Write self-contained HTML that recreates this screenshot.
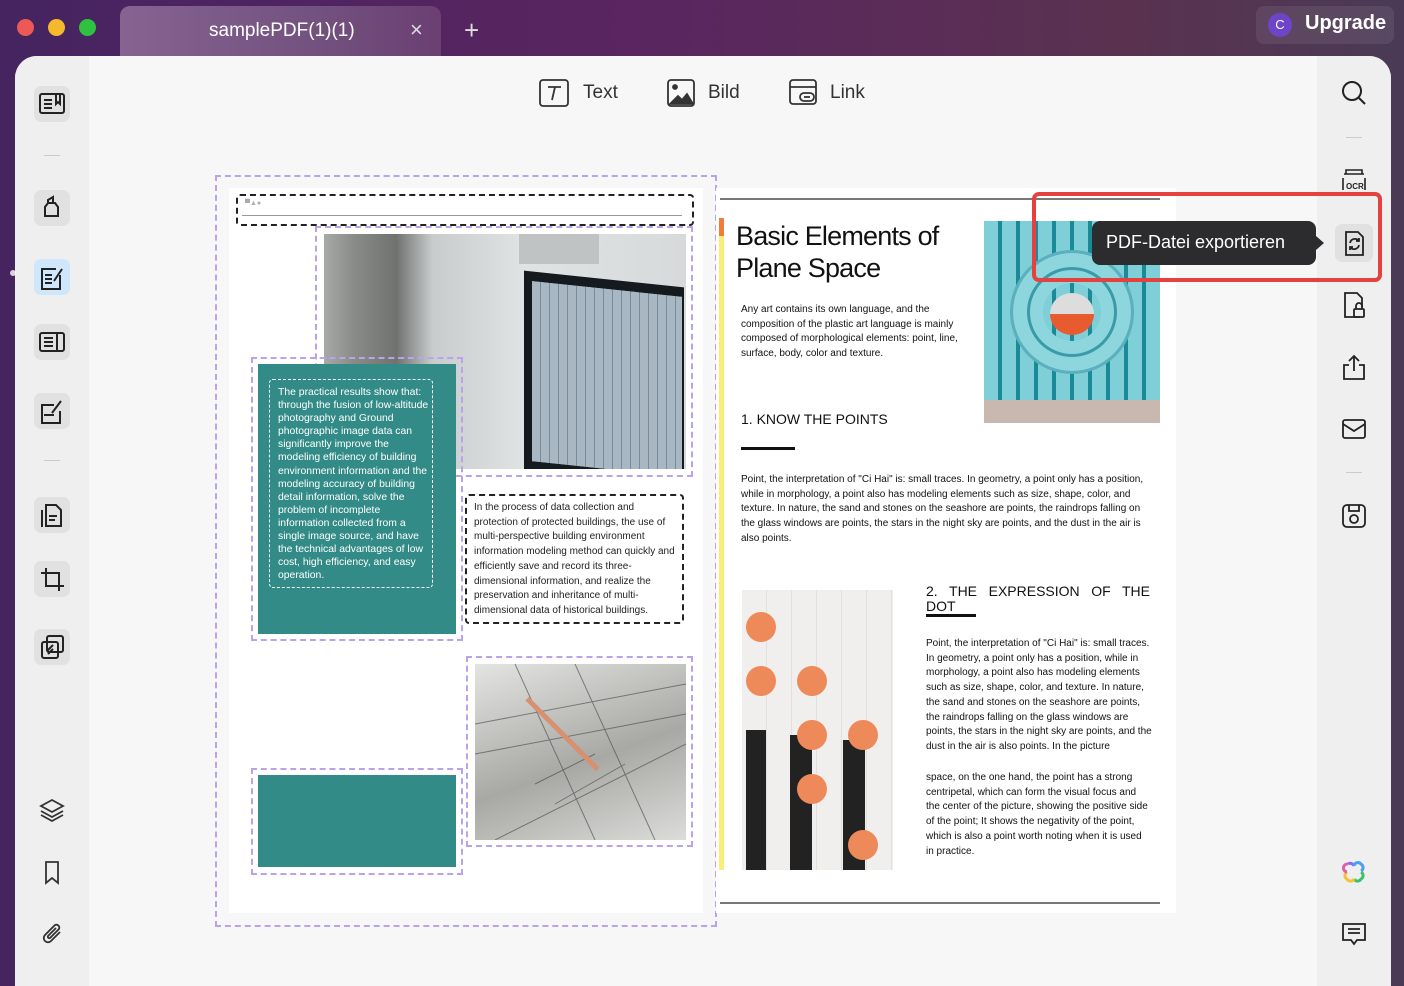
<!DOCTYPE html>
<html><head><meta charset="utf-8"><style>
*{margin:0;padding:0;box-sizing:border-box}
body{width:1404px;height:972px;overflow:hidden;position:relative;font-family:"Liberation Sans",Arial,sans-serif;background:linear-gradient(90deg,#452460 0%,#5a2560 45%,#5a3250 80%,#4a3a55 100%)}
.a{position:absolute}
.dot{position:absolute;top:19px;width:17px;height:17px;border-radius:50%}
.sb{position:absolute;left:34px;width:36px;height:36px;border-radius:7px;background:#e1e1e1}
.ri{position:absolute;left:1340px}
.dash{border:2px dashed #b9a3ea}
.bd{border:2px dashed #222}
.t10{font-size:10px;line-height:13px}
</style></head><body>
<div class="dot" style="left:17px;background:#ed5a56"></div>
<div class="dot" style="left:48px;background:#f4b92d"></div>
<div class="dot" style="left:79px;background:#2fc240"></div>
<div class="a" style="left:120px;top:6px;width:321px;height:52px;border-radius:10px 10px 0 0;background:linear-gradient(90deg,#866391,#73527f 60%,#6b3f72)"></div>
<div class="a" style="left:209px;top:20px;color:#fff;font-size:19px">samplePDF(1)(1)</div>
<div class="a" style="left:410px;top:17px;color:#ddd;font-size:22px">×</div>
<div class="a" style="left:464px;top:15px;color:#ddd;font-size:26px;font-weight:300">+</div>
<div class="a" style="left:1256px;top:6px;width:138px;height:38px;border-radius:8px;background:rgba(255,255,255,.08)"></div>
<div class="a" style="left:1268px;top:13px;width:24px;height:24px;border-radius:50%;background:#6e45c9;color:#fff;font-size:13px;text-align:center;line-height:24px">C</div>
<div class="a" style="left:1305px;top:12px;color:#fff;font-size:20px;font-weight:bold">Upgrade</div>

<div class="a" style="left:15px;top:56px;width:1376px;height:930px;border-radius:22px 22px 0 0;background:#f7f7f7;overflow:hidden">
 <div class="a" style="left:0;top:0;width:74px;height:930px;background:#efefef"></div>
 <div class="a" style="left:1302px;top:0;width:74px;height:930px;background:#efefef"></div>
</div>
<div class="a" style="left:10px;top:270px;width:6px;height:6px;border-radius:50%;background:#fff;opacity:.8"></div>

<div class="sb" style="top:86px"></div>
<svg class="a" style="left:38px;top:90px" width="28" height="28" fill="none" stroke="#222" stroke-width="2"><rect x="2" y="4" width="24" height="19" rx="2"/><path d="M6 10h8M6 14h8M6 18h8M18 4v10l2-2 2 2V4"/></svg>
<div class="a" style="left:44px;top:155px;width:16px;height:1px;background:#ccc"></div>
<div class="sb" style="top:190px"></div>
<svg class="a" style="left:38px;top:194px" width="28" height="28" fill="none" stroke="#222" stroke-width="2"><path d="M10 6l5-3v6H10zM7 13l3-4h7l3 4v9H7z"/></svg>
<div class="sb" style="top:259px;background:#cfe7fb"></div>
<svg class="a" style="left:38px;top:263px" width="28" height="28" fill="none" stroke="#222" stroke-width="2"><path d="M18 6H4v20h18V12M7 12h7M7 16h7M7 20h7M16 18l8-12"/></svg>
<div class="sb" style="top:324px"></div>
<svg class="a" style="left:38px;top:328px" width="28" height="28" fill="none" stroke="#222" stroke-width="2"><rect x="2" y="5" width="24" height="18" rx="2"/><path d="M6 10h9M6 14h9M6 18h9M19 5v18"/></svg>
<div class="sb" style="top:393px"></div>
<svg class="a" style="left:38px;top:397px" width="28" height="28" fill="none" stroke="#222" stroke-width="2"><path d="M16 8H4v18h18V14M6 18h10M14 16l9-12"/></svg>
<div class="a" style="left:44px;top:460px;width:16px;height:1px;background:#ccc"></div>
<div class="sb" style="top:497px"></div>
<svg class="a" style="left:38px;top:501px" width="28" height="28" fill="none" stroke="#222" stroke-width="2"><path d="M8 4h10l5 5v16H8zM4 9v17"/><path d="M11 15h8M11 19h6"/></svg>
<div class="sb" style="top:561px"></div>
<svg class="a" style="left:38px;top:565px" width="28" height="28" fill="none" stroke="#222" stroke-width="2"><path d="M8 3v18h18M3 8h18v18"/></svg>
<div class="sb" style="top:629px"></div>
<svg class="a" style="left:38px;top:633px" width="28" height="28" fill="none" stroke="#222" stroke-width="2"><rect x="9" y="3" width="16" height="16" rx="2"/><rect x="4" y="9" width="16" height="16" rx="2"/><path d="M9 18l6-6M10 21l5-5"/></svg>
<svg class="a" style="left:38px;top:796px" width="28" height="28" fill="none" stroke="#333" stroke-width="1.8"><path d="M14 4l11 6-11 6-11-6zM3 15l11 6 11-6M3 19l11 6 11-6"/></svg>
<svg class="a" style="left:38px;top:858px" width="28" height="28" fill="none" stroke="#333" stroke-width="1.8"><path d="M8 4h12v21l-6-5-6 5z"/></svg>
<svg class="a" style="left:38px;top:920px" width="28" height="28" fill="none" stroke="#333" stroke-width="1.8"><path d="M22 12l-9 9a4 4 0 0 1-6-6l10-10a3 3 0 0 1 4 4l-9 9a1.5 1.5 0 0 1-2-2l8-8"/></svg>

<svg class="a" style="left:538px;top:78px" width="32" height="30" fill="none" stroke="#333" stroke-width="1.8"><rect x="2" y="2" width="28" height="26" rx="3"/><path d="M10 9h13M17 9l-3 13"/></svg>
<div class="a" style="left:583px;top:82px;font-size:19px;color:#333">Text</div>
<svg class="a" style="left:666px;top:78px" width="30" height="30" fill="none" stroke="#333" stroke-width="1.8"><rect x="2" y="2" width="26" height="26" rx="3"/><circle cx="9" cy="9" r="2" fill="#333"/><path d="M4 26l8-8 4 4 5-6 6 10z" fill="#333"/></svg>
<div class="a" style="left:708px;top:82px;font-size:19px;color:#333">Bild</div>
<svg class="a" style="left:788px;top:78px" width="32" height="30" fill="none" stroke="#333" stroke-width="1.8"><rect x="2" y="2" width="26" height="24" rx="3"/><path d="M2 9h26"/><rect x="12" y="15" width="14" height="8" rx="4"/><path d="M16 19h6"/></svg>
<div class="a" style="left:830px;top:82px;font-size:19px;color:#333">Link</div>

<svg class="ri" style="top:79px" width="28" height="28" fill="none" stroke="#222" stroke-width="2"><circle cx="12" cy="12" r="9"/><path d="M19 19l6 6"/></svg>
<div class="a" style="left:1346px;top:137px;width:16px;height:1px;background:#ccc"></div>
<svg class="ri" style="top:166px" width="28" height="28" fill="none" stroke="#222" stroke-width="1.6"><path d="M4 8h20M6 8V4h16v4M3 12v12M25 12v12"/><text x="6" y="23" font-size="8" font-family="Liberation Sans" fill="#222" stroke="none" font-weight="bold">OCR</text></svg>
<div class="a" style="left:1335px;top:224px;width:38px;height:38px;border-radius:7px;background:#e1e1e1"></div>
<svg class="ri" style="top:229px" width="28" height="28" fill="none" stroke="#222" stroke-width="1.8"><path d="M6 3h12l5 5v18H6z"/><path d="M10 14a5 5 0 0 1 9-2M19 16a5 5 0 0 1-9 2M19 9v3h-3M10 21v-3h3"/></svg>
<svg class="ri" style="top:291px" width="28" height="28" fill="none" stroke="#222" stroke-width="1.8"><path d="M20 26H5V2h12l5 5v9"/><rect x="14" y="18" width="10" height="8" rx="1"/><path d="M16 18v-3a3 3 0 0 1 6 0v3"/></svg>
<svg class="ri" style="top:353px" width="28" height="28" fill="none" stroke="#222" stroke-width="1.8"><path d="M9 12H4v14h20V12h-5M14 18V3M9 8l5-5 5 5"/></svg>
<svg class="ri" style="top:415px" width="28" height="28" fill="none" stroke="#222" stroke-width="1.8"><rect x="3" y="5" width="22" height="18" rx="2"/><path d="M3 9l11 7 11-7"/></svg>
<div class="a" style="left:1346px;top:472px;width:16px;height:1px;background:#ccc"></div>
<svg class="ri" style="top:502px" width="28" height="28" fill="none" stroke="#222" stroke-width="1.8"><rect x="3" y="3" width="22" height="22" rx="4"/><path d="M9 3v6h10V3"/><circle cx="14" cy="17" r="4"/></svg>
<svg class="ri" style="top:858px" width="28" height="28" fill="none" stroke-width="3"><path d="M8 6a4 4 0 0 1 6 2" stroke="#8a6cf0"/><path d="M14 8a4 4 0 0 1 7-2 4 4 0 0 1 0 7" stroke="#4aa0f0"/><path d="M21 14a4 4 0 0 1 0 7 4 4 0 0 1-7 0" stroke="#3fc06a"/><path d="M14 21a4 4 0 0 1-7 0 4 4 0 0 1 0-7" stroke="#f3c23a"/><path d="M7 14a4 4 0 0 1 1-8" stroke="#e060b0"/></svg>
<svg class="ri" style="top:920px" width="28" height="28" fill="none" stroke="#222" stroke-width="1.8"><path d="M3 4h22v16H17l-3 4-3-4H3z"/><path d="M8 9h12M8 13h12"/></svg>

<!-- left page -->
<div class="a dash" style="left:215px;top:175px;width:502px;height:752px"></div>
<div class="a" style="left:229px;top:188px;width:474px;height:725px;background:#fff"></div>
<div class="a bd" style="left:236px;top:194px;width:458px;height:32px;border-radius:4px"></div>
<div class="a" style="left:242px;top:215px;width:440px;height:1px;background:#999"></div>
<div class="a" style="left:245px;top:200px;font-size:7px;color:#aaa">▀▲●</div>
<div class="a dash" style="left:315px;top:226px;width:378px;height:251px"></div>
<div class="a" style="left:324px;top:234px;width:362px;height:235px;overflow:hidden;background:linear-gradient(90deg,#a8aaa8 0%,#8a8c8a 8%,#707270 20%,#c8cccc 30%,#dfe3e3 55%,#d6dada 100%)">
 <div class="a" style="left:200px;top:45px;width:160px;height:200px;background:#151a1e;transform:skewY(6deg)"></div>
 <div class="a" style="left:208px;top:55px;width:150px;height:180px;background:repeating-linear-gradient(90deg,#b8c8d4 0 8px,#7f9ab0 8px 9px),#b8c8d4;transform:skewY(6deg);opacity:.9"></div>
 <div class="a" style="left:195px;top:0;width:80px;height:30px;background:#bfc3c3"></div>
</div>
<div class="a dash" style="left:251px;top:357px;width:212px;height:284px"></div>
<div class="a" style="left:258px;top:364px;width:198px;height:270px;background:#338b87"></div>
<div class="a" style="left:269px;top:379px;width:164px;height:209px;border:1.5px dashed #fff;border-radius:4px"></div>
<div class="a" style="left:278px;top:386px;width:152px;color:#fff;font-size:10.4px;line-height:13.1px">The practical results show that: through the fusion of low-altitude photography and Ground photographic image data can significantly improve the modeling efficiency of building environment information and the modeling accuracy of building detail information, solve the problem of incomplete information collected from a single image source, and have the technical advantages of low cost, high efficiency, and easy operation.</div>
<div class="a bd" style="left:465px;top:494px;width:219px;height:130px;border-radius:4px"></div>
<div class="a" style="left:474px;top:501px;width:206px;color:#222;font-size:10px;line-height:14.7px">In the process of data collection and protection of protected buildings, the use of multi-perspective building environment information modeling method can quickly and efficiently save and record its three-dimensional information, and realize the preservation and inheritance of multi-dimensional data of historical buildings.</div>
<div class="a dash" style="left:466px;top:656px;width:227px;height:191px"></div>
<div class="a" style="left:475px;top:664px;width:211px;height:176px;overflow:hidden;background:linear-gradient(160deg,#e4e4e2,#a8a8a4 55%,#dcdcda)">
 <svg width="211" height="176" fill="none" stroke="#444" stroke-width="1" opacity=".6"><path d="M0 60L211 20M0 90L211 50M20 176L211 80M40 0L120 176M100 0L180 176M60 120l60-30M80 140l70-40"/></svg>
 <div class="a" style="left:85px;top:20px;width:5px;height:100px;background:#d89070;transform:rotate(-45deg)"></div>
</div>
<div class="a dash" style="left:251px;top:768px;width:212px;height:107px"></div>
<div class="a" style="left:258px;top:775px;width:198px;height:92px;background:#338b87"></div>

<!-- right page -->
<div class="a" style="left:716px;top:188px;width:460px;height:725px;background:#fff"></div>
<div class="a" style="left:720px;top:198px;width:440px;height:1.5px;background:#777"></div>
<div class="a" style="left:720px;top:902px;width:440px;height:1.5px;background:#777"></div>
<div class="a" style="left:719px;top:218px;width:5px;height:652px;background:#f8ee7a"></div>
<div class="a" style="left:719px;top:218px;width:5px;height:18px;background:#ef7d3c"></div>
<div class="a" style="left:736px;top:220px;font-size:27px;line-height:32px;color:#111;letter-spacing:-.8px">Basic Elements of<br>Plane Space</div>
<div class="a t10" style="left:741px;top:303px;width:225px;color:#111;line-height:14.7px">Any art contains its own language, and the composition of the plastic art language is mainly composed of morphological elements: point, line, surface, body, color and texture.</div>
<div class="a" style="left:984px;top:221px;width:176px;height:202px;background:repeating-linear-gradient(90deg,#7fcfd8 0 14px,#1a8a98 14px 18px);"></div>
<div class="a" style="left:1010px;top:250px;width:124px;height:124px;border-radius:50%;border:3px solid #5ab0bc;box-shadow:inset 0 0 0 14px #8ed6de,inset 0 0 0 17px #3a9aa8,inset 0 0 0 30px #8ed6de"></div>
<div class="a" style="left:1050px;top:293px;width:44px;height:42px;border-radius:50%;background:linear-gradient(#ddd 50%,#e85a30 50%)"></div>
<div class="a" style="left:984px;top:400px;width:176px;height:23px;background:#c8b8b0"></div>
<div class="a" style="left:741px;top:411px;font-size:14px;color:#111">1. KNOW THE POINTS</div>
<div class="a" style="left:741px;top:447px;width:54px;height:3px;background:#111"></div>
<div class="a t10" style="left:741px;top:473px;width:412px;color:#111;line-height:14.7px">Point, the interpretation of "Ci Hai" is: small traces. In geometry, a point only has a position, while in morphology, a point also has modeling elements such as size, shape, color, and texture. In nature, the sand and stones on the seashore are points, the raindrops falling on the glass windows are points, the stars in the night sky are points, and the dust in the air is also points.</div>
<div class="a" style="left:742px;top:590px;width:151px;height:280px;background:repeating-linear-gradient(90deg,#f0efed 0 24px,#e2e0dc 24px 25px)"></div>
<div class="a" style="left:746px;top:730px;width:20px;height:140px;background:#222"></div>
<div class="a" style="left:790px;top:735px;width:22px;height:135px;background:#222"></div>
<div class="a" style="left:843px;top:740px;width:22px;height:130px;background:#222"></div>
<div class="a" style="left:746px;top:612px;width:30px;height:30px;border-radius:50%;background:#ee8a5a"></div>
<div class="a" style="left:746px;top:666px;width:30px;height:30px;border-radius:50%;background:#ee8a5a"></div>
<div class="a" style="left:797px;top:666px;width:30px;height:30px;border-radius:50%;background:#ee8a5a"></div>
<div class="a" style="left:797px;top:720px;width:30px;height:30px;border-radius:50%;background:#ee8a5a"></div>
<div class="a" style="left:848px;top:720px;width:30px;height:30px;border-radius:50%;background:#ee8a5a"></div>
<div class="a" style="left:797px;top:774px;width:30px;height:30px;border-radius:50%;background:#ee8a5a"></div>
<div class="a" style="left:848px;top:830px;width:30px;height:30px;border-radius:50%;background:#ee8a5a"></div>
<div class="a" style="left:926px;top:584px;width:224px;font-size:14px;color:#111;line-height:15px;text-align:justify;text-align-last:justify">2. THE EXPRESSION OF THE</div>
<div class="a" style="left:926px;top:599px;font-size:14px;color:#111;line-height:15px">DOT</div>
<div class="a" style="left:926px;top:614px;width:50px;height:3px;background:#111"></div>
<div class="a t10" style="left:926px;top:637px;width:228px;color:#111;line-height:14.7px">Point, the interpretation of "Ci Hai" is: small traces. In geometry, a point only has a position, while in morphology, a point also has modeling elements such as size, shape, color, and texture. In nature, the sand and stones on the seashore are points, the raindrops falling on the glass windows are points, the stars in the night sky are points, and the dust in the air is also points. In the picture</div>
<div class="a t10" style="left:926px;top:771px;width:222px;color:#111;line-height:14.7px">space, on the one hand, the point has a strong centripetal, which can form the visual focus and the center of the picture, showing the positive side of the point; It shows the negativity of the point, which is also a point worth noting when it is used in practice.</div>

<div class="a" style="left:1092px;top:221px;width:224px;height:44px;border-radius:8px;background:#2c2c2e"></div>
<div class="a" style="left:1316px;top:236px;width:0;height:0;border-top:7px solid transparent;border-bottom:7px solid transparent;border-left:8px solid #2c2c2e"></div>
<div class="a" style="left:1106px;top:232px;color:#fff;font-size:18px">PDF-Datei exportieren</div>
<div class="a" style="left:1032px;top:192px;width:350px;height:90px;border:4px solid #e5413f;border-radius:7px"></div>
</body></html>
